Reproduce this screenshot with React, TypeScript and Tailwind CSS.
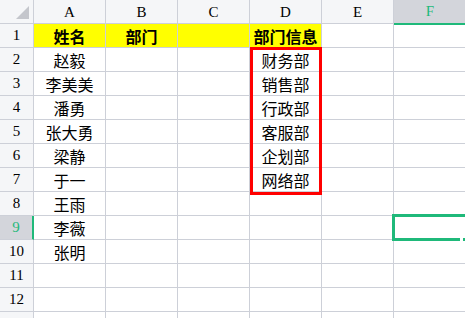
const cols = ["A", "B", "C", "D", "E", "F"];

type Row = { n: number; a?: string; b?: string; d?: string; head?: boolean };

const rows: Row[] = [
  { n: 1, a: "姓名", b: "部门", d: "部门信息", head: true },
  { n: 2, a: "赵毅", d: "财务部" },
  { n: 3, a: "李美美", d: "销售部" },
  { n: 4, a: "潘勇", d: "行政部" },
  { n: 5, a: "张大勇", d: "客服部" },
  { n: 6, a: "梁静", d: "企划部" },
  { n: 7, a: "于一", d: "网络部" },
  { n: 8, a: "王雨" },
  { n: 9, a: "李薇" },
  { n: 10, a: "张明" },
  { n: 11 },
  { n: 12 },
  { n: 13 },
];

const cjk = { fontFamily: '"Noto Sans CJK SC", sans-serif' };
const latin = { fontFamily: '"Liberation Serif", "Noto Sans CJK SC", serif' };

const App = () => {
  return (
    <div className="relative w-[465px] h-[318px] overflow-hidden bg-white text-black">
      {/* column headers */}
      <div className="flex h-6 bg-[#f5f6f8]">
        <div className="relative w-[34px] shrink-0 border-r border-b border-[#cdd0d8]">
          <div className="absolute right-[4px] bottom-[4px] w-0 h-0 border-l-[13px] border-l-transparent border-b-[13px] border-b-[#c4c6cc]" />
        </div>
        {cols.map((c) =>
          c === "F" ? (
            <div key={c} className="w-[72px] shrink-0 flex flex-col">
              <div className="h-[5px]" />
              <div
                className="flex-1 flex items-center justify-center bg-[#d3d5db] border-b-2 border-[#1fb97a] text-[#1fb97a] text-[15px]"
                style={latin}
              >
                {c}
              </div>
            </div>
          ) : (
            <div
              key={c}
              className="w-[72px] shrink-0 flex items-center justify-center border-r border-b border-[#cdd0d8] text-[15px] pt-[2px]"
              style={latin}
            >
              {c}
            </div>
          )
        )}
      </div>

      {rows.map((r) => {
        const sel = r.n === 9;
        return (
          <div key={r.n} className="flex h-6">
            <div
              className={
                sel
                  ? "w-[34px] shrink-0 flex items-center justify-center bg-[#d3d5db] border-r-2 border-r-[#1fb97a] border-b border-b-[#cdd0d8] text-[#1fb97a] text-[15px]"
                  : "w-[34px] shrink-0 flex items-center justify-center bg-[#f5f6f8] border-r border-b border-[#cdd0d8] text-[15px]"
              }
              style={latin}
            >
              {r.n < 13 ? r.n : ""}
            </div>
            {cols.map((c) => {
              let text = "";
              if (c === "A") text = r.a ?? "";
              if (c === "B") text = r.b ?? "";
              if (c === "D") text = r.d ?? "";
              return (
                <div
                  key={c}
                  className={
                    (r.head && c !== "E" && c !== "F" ? "bg-[#ffff00] font-bold " : "") +
                    "w-[72px] shrink-0 flex items-center justify-center border-r border-b border-[#cdd0d8] text-[16px] leading-none"
                  }
                  style={cjk}
                >
                  {text}
                </div>
              );
            })}
          </div>
        );
      })}

      {/* red outline around D2:D7 */}
      <div className="absolute left-[250px] top-[47px] w-[72px] h-[148px] border-[3px] border-[#ff0000]" />

      {/* selected cell F9 */}
      <div className="absolute left-[392px] top-[214px] w-[80px] h-[27px] border-[3px] border-[#1fb97a]" />
      <div className="absolute left-[460px] top-[236px] w-[3px] h-[6px] bg-white" />
    </div>
  );
};

export default App;
